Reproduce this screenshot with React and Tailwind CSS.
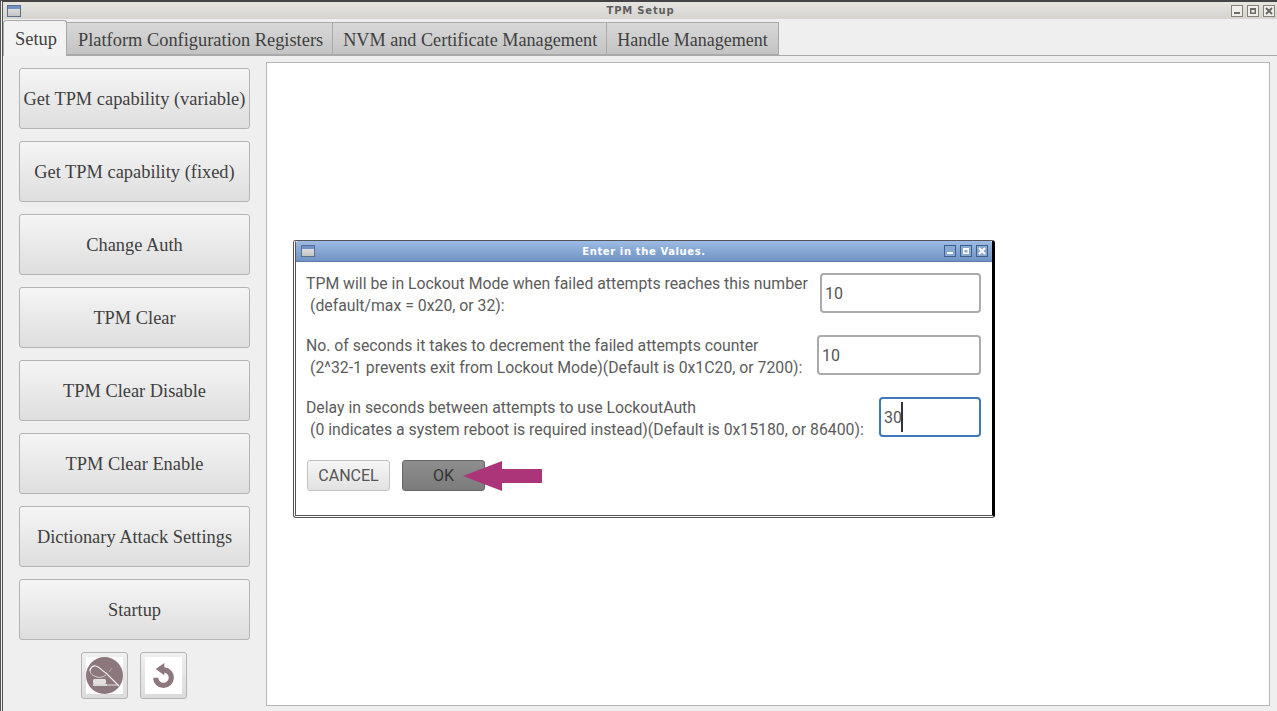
import { useState } from "react";

const sideButtons = [
  "Get TPM capability (variable)",
  "Get TPM capability (fixed)",
  "Change Auth",
  "TPM Clear",
  "TPM Clear Disable",
  "TPM Clear Enable",
  "Dictionary Attack Settings",
  "Startup",
];

const tabs = [
  { label: "Platform Configuration Registers", cls: "text-[18.4px] pl-[11px] pr-[9px]" },
  { label: "NVM and Certificate Management", cls: "text-[18.2px] pl-[10px] pr-[9px]" },
  { label: "Handle Management", cls: "text-[18px] px-[10px]" },
];

const fields = [
  { lines: ["TPM will be in Lockout Mode when failed attempts reaches this number", "(default/max = 0x20, or 32):"], value: "10", w: "w-[161px]" },
  { lines: ["No. of seconds it takes to decrement the failed attempts counter", "(2^32-1 prevents exit from Lockout Mode)(Default is 0x1C20, or 7200):"], value: "10", w: "w-[164px]" },
  { lines: ["Delay in seconds between attempts to use LockoutAuth", "(0 indicates a system reboot is required instead)(Default is 0x15180, or 86400):"], value: "30", w: "w-[102px]", focus: true },
];

function WinIcon() {
  return (
    <div className="w-[14px] h-[12px] border border-[#5c6f8c] bg-gradient-to-b from-[#e8e8e8] to-[#c4c4c4]">
      <div className="h-[3px] bg-[#6f93c6]"></div>
    </div>
  );
}

function WinButtons({ dialog }) {
  const box = dialog
    ? "w-[12px] h-[12px] border border-[#3f5f8c] bg-[#8aa9d2] flex items-center justify-center text-white"
    : "w-[12px] h-[12px] border border-[#85827a] bg-[#efeeec] flex items-center justify-center text-[#6b6b6b]";
  return (
    <div className="flex gap-[4px]">
      <div className={box}>
        <svg width="8" height="8" viewBox="0 0 8 8"><rect x="1" y="5" width="6" height="2" fill="currentColor" /></svg>
      </div>
      <div className={box}>
        <svg width="8" height="8" viewBox="0 0 8 8"><path d="M1 1h6v6H1z M2.500 3v2.500h3V3z" fill="currentColor" fillRule="evenodd" /></svg>
      </div>
      <div className={box}>
        <svg width="8" height="8" viewBox="0 0 8 8"><path d="M1 1l6 6M7 1L1 7" stroke="currentColor" strokeWidth="2" /></svg>
      </div>
    </div>
  );
}

function Dialog() {
  return (
    <div className="absolute left-[293px] top-[240px] w-[702px] h-[278px] bg-white border-t border-l-[3px] border-b-[3px] border-r-[3px] border-double [border-right-style:solid] border-[#555] border-r-black rounded-[3px] font-['Roboto',sans-serif]">
      <div className="h-[21px] bg-gradient-to-b from-[#9dbbe4] to-[#6f93c4] border-b border-[#5c7dab] flex items-center pl-[5px] pr-[4px] relative rounded-t-[2px]">
        <WinIcon />
        <div className="absolute left-0 right-0 text-center font-['DejaVu_Sans',sans-serif] font-bold text-[10px] tracking-[0.62px] text-white">Enter in the Values.</div>
        <div className="ml-auto">
          <WinButtons dialog />
        </div>
      </div>
      <div className="pl-[10px] pr-[11px] pt-[11px]">
        {fields.map((f) => (
          <div key={f.lines[0]} className="flex justify-between h-[62px]">
            <div className="text-[15.8px] leading-[22px] text-[#5c5c5c] whitespace-nowrap">
              <div>{f.lines[0]}</div>
              <div className="pl-[4px]">{f.lines[1]}</div>
            </div>
            <div className={`${f.w} h-[40px] border-2 pt-[9px] ${f.focus ? "border-[#3f78b8]" : "border-[#ababab]"} pl-[3px] rounded-[4px] bg-white text-[16px] leading-[20px] text-[#555] relative`}>
              {f.value}
              {f.focus && <span className="absolute left-[20px] top-[3px] w-[2px] h-[30px] bg-[#333]"></span>}
            </div>
          </div>
        ))}
        <div className="flex gap-[12px] mt-[1px] ml-[1px] relative">
          <div className="w-[83px] h-[31px] border border-[#c2c2c2] rounded-[3px] bg-gradient-to-b from-[#f6f6f6] to-[#e2e2e2] flex items-center justify-center text-[16px] text-[#555]">CANCEL</div>
          <div className="w-[83px] h-[31px] border border-[#666] rounded-[3px] bg-gradient-to-b from-[#8e8e8e] to-[#7c7c7c] flex items-center justify-center text-[16px] text-[#333]">OK</div>
          <svg className="absolute left-[156px] top-[1px]" width="80" height="30" viewBox="0 0 80 30">
            <path d="M0 15 L39 0 V8 H79 V22 H39 V30 Z" fill="#ab3578" />
          </svg>
        </div>
      </div>
    </div>
  );
}

export default function App() {
  const [active] = useState("Setup");
  return (
    <div className="relative w-[1277px] h-[711px] overflow-hidden bg-[#efefef] border-l-[3px] border-t-2 border-double border-l-[#555] border-t-[#444] flex flex-col font-['Liberation_Serif',serif]">
      {/* main window title bar */}
      <div className="h-[17px] shrink-0 bg-gradient-to-b from-[#e6e5e1] to-[#d4d3ce] flex items-center pl-[4px] pr-[2px] relative">
        <WinIcon />
        <div className="absolute left-[1px] right-0 text-center font-['DejaVu_Sans',sans-serif] font-bold text-[10px] tracking-[0.8px] text-[#5f5f5f]">TPM Setup</div>
        <div className="ml-auto">
          <WinButtons />
        </div>
      </div>

      {/* tabs */}
      <div className="h-[37px] shrink-0 border-b border-[#a9a9a9] flex items-end relative">
        <div className="h-[36px] -mb-px w-[64px] pl-[11px] pt-[7px] bg-[#f2f2f2] border border-[#a9a9a9] border-b-0 rounded-t-[3px] text-[18.4px] leading-[22px] text-[#3f3f3f] whitespace-nowrap relative">{active}</div>
        {tabs.map((t) => (
          <div key={t.label} className={`h-[33px] pt-[6px] bg-gradient-to-b from-[#d8d8d8] to-[#c4c4c4] border border-l-0 border-[#a9a9a9] leading-[22px] text-[#3f3f3f] whitespace-nowrap ${t.cls}`}>{t.label}</div>
        ))}
      </div>

      {/* body */}
      <div className="flex-1 flex min-h-0 pl-[16px] pr-[7px] pt-[6px] pb-[5px] gap-[16px]">
        <div className="w-[231px] shrink-0 flex flex-col pt-[6px]">
          {sideButtons.map((b) => (
            <div key={b} className="h-[61px] pt-[2px] mb-[12px] shrink-0 border border-[#b4b4b4] rounded-[3px] bg-gradient-to-b from-[#f5f5f5] to-[#dedede] flex items-center justify-center text-[18.4px] text-[#3f3f3f] whitespace-nowrap">{b}</div>
          ))}
          <div className="flex justify-center gap-[12px] pr-[1px]">
            <div className="w-[47px] h-[47px] border border-[#b4b4b4] rounded-[3px] bg-gradient-to-b from-[#f0f0f0] to-[#dcdcdc] flex items-center justify-center">
              <div className="w-[37px] h-[37px] bg-white flex items-center justify-center">
                <svg width="37" height="37" viewBox="0 0 37 37">
                  <circle cx="18.500" cy="18.500" r="18.500" fill="#8c787c" />
                  <path d="M4 14c0-3 3-6 6-5 4 1 6 5 10 7l13 13" fill="none" stroke="#f2f0f0" strokeWidth="1.200" />
                  <path d="M4 14c1 4 4 5 7 6s6 0 9-2" fill="none" stroke="#d9d2d3" strokeWidth="1" />
                  <path d="M26 11l-3 4" stroke="#b5abac" strokeWidth="1" />
                  <rect x="7" y="22" width="13" height="5" rx="1.500" fill="#e4e0e0" />
                  <path d="M7 28h14" stroke="#f5f5f5" strokeWidth="1.500" />
                  <path d="M21 28h12" stroke="#e4e0e0" strokeWidth="1" />
                </svg>
              </div>
            </div>
            <div className="w-[47px] h-[47px] border border-[#b4b4b4] rounded-[3px] bg-gradient-to-b from-[#f0f0f0] to-[#dcdcdc] flex items-center justify-center">
              <div className="w-[37px] h-[37px] bg-white flex items-center justify-center">
                <svg width="21" height="26" viewBox="0 0 24 30">
                  <path d="M13 0 L3 7 L13 14 V11 A6 6 0 1 1 6 17 H0 A12 12 0 1 0 13 5 Z" fill="#8c787c" />
                </svg>
              </div>
            </div>
          </div>
        </div>
        <div className="flex-1 bg-white border border-[#b4b4b4]"></div>
      </div>

      <div className="absolute -left-[3px] -top-[2px] w-[1277px] h-[711px] pointer-events-none">
        <Dialog />
      </div>
    </div>
  );
}
